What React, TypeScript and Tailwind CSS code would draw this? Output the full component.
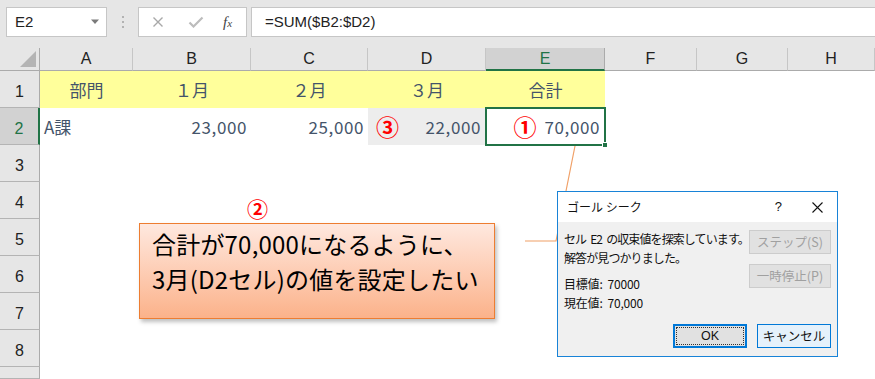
import React from "react";

const JP = { fontFamily: '"Noto Sans CJK JP", "Noto Sans", sans-serif' };
const LAT = { fontFamily: '"Liberation Sans", Arial, sans-serif' };

const colWidths = "grid-cols-[40px_93px_118px_117px_118px_119px_92px_91px_87px]";
const letters = ["A", "B", "C", "D", "E", "F", "G", "H"];

function RowHead({ n, selected, h = "h-[37px]" }: { n: number | string; selected?: boolean; h?: string }) {
  return (
    <div
      className={`${h} flex items-end justify-center pb-[3px] border-b border-[#b4b4b4] text-[16px] leading-none ${
        selected
          ? "bg-[#d2d2d2] border-r-2 border-r-[#217346] text-[#217346]"
          : "bg-[#e6e6e6] border-r border-r-[#ababab] text-[#222]"
      }`}
      style={LAT}
    >
      <span className="pb-[4px]">{n}</span>
    </div>
  );
}

export default function App() {
  return (
    <div className="relative w-[875px] h-[379px] overflow-hidden bg-white select-none">
      {/* formula bar */}
      <div className="h-[48px] bg-[#e6e6e6] flex items-start pt-[7px] pl-[6px]">
        <div className="w-[101px] h-[30px] bg-white border border-[#c6c6c6] flex items-center justify-between pl-[8px] pr-[6px]">
          <span className="text-[15px] text-[#222]" style={LAT}>E2</span>
          <svg width="10" height="6" viewBox="0 0 10 6"><path d="M1 0.5 L9 0.5 L5 5 Z" fill="#7a7a7a" /></svg>
        </div>
        <div className="w-[31px] h-[30px] flex items-center justify-center">
          <svg width="4" height="14" viewBox="0 0 4 14">
            <rect x="1" y="1" width="2" height="2" fill="#b2b2b2" />
            <rect x="1" y="6" width="2" height="2" fill="#b2b2b2" />
            <rect x="1" y="11" width="2" height="2" fill="#b2b2b2" />
          </svg>
        </div>
        <div className="w-[109px] h-[30px] bg-white border border-[#c6c6c6] flex items-center">
          <svg className="ml-[13px]" width="12" height="12" viewBox="0 0 12 12">
            <path d="M1.5 1.5 L10.5 10.5 M10.5 1.5 L1.5 10.5" stroke="#a8a8a8" strokeWidth="1.4" />
          </svg>
          <svg className="ml-[24px]" width="16" height="12" viewBox="0 0 16 12">
            <path d="M1.5 6.5 L5.5 10.5 L14.5 1.5" stroke="#bcbcbc" strokeWidth="2.2" fill="none" />
          </svg>
          <span className="ml-[19px] text-[15px] italic text-[#444]" style={{ fontFamily: '"Liberation Serif", serif' }}>
            f<span className="text-[11px]">x</span>
          </span>
        </div>
        <div className="ml-[4px] flex-1 h-[30px] bg-white border border-r-0 border-[#c6c6c6] flex items-center pl-[13px]">
          <span className="text-[15px] text-[#222]" style={LAT}>=SUM($B2:$D2)</span>
        </div>
      </div>

      {/* column headers */}
      <div className={`grid ${colWidths} h-[23px]`}>
        <div className="bg-[#e6e6e6] border-r border-b border-[#ababab] flex items-end justify-end pr-[3px] pb-[3px]">
          <svg width="16" height="16" viewBox="0 0 16 16"><path d="M16 0 L16 16 L0 16 Z" fill="#b4b4b4" /></svg>
        </div>
        {letters.map((l) => (
          <div
            key={l}
            className={`flex items-center justify-center text-[16px] leading-none ${
              l === "E"
                ? "bg-[#d2d2d2] border-b-2 border-b-[#217346] border-r border-r-[#ababab] text-[#217346]"
                : "bg-[#e6e6e6] border-b border-b-[#ababab] border-r border-r-[#c6c6c6] text-[#222]"
            }`}
            style={LAT}
          >
            {l}
          </div>
        ))}
      </div>

      {/* row 1 */}
      <div className={`grid ${colWidths}`}>
        <RowHead n={1} />
        {["部門", "１月", "２月", "３月", "合計"].map((t) => (
          <div key={t} className="h-[37px] bg-[#ffff9b] flex items-center justify-center text-[17px] text-[#44546a]" style={JP}>
            {t}
          </div>
        ))}
        <div />
        <div />
        <div />
      </div>

      {/* row 2 */}
      <div className={`grid ${colWidths}`}>
        <RowHead n={2} selected />
        <div className="h-[37px] flex items-center pl-[4px] text-[17px] text-[#44546a]" style={JP}>A課</div>
        <div className="h-[37px] flex items-center justify-end pr-[4px] text-[17px] text-[#44546a] tracking-[0.6px]" style={JP}>23,000</div>
        <div className="h-[37px] flex items-center justify-end pr-[4px] text-[17px] text-[#44546a] tracking-[0.6px]" style={JP}>25,000</div>
        <div className="h-[37px] bg-[#ededed] flex items-center justify-between pl-[8px] pr-[5px]" style={JP}>
          <span className="text-[23px] font-bold text-[#ff0000]">③</span>
          <span className="text-[17px] text-[#44546a] tracking-[0.6px]">22,000</span>
        </div>
        <div className="relative h-[37px] flex items-center justify-end pr-[5px]" style={JP}>
          <span className="text-[23px] font-bold text-[#ff0000] mr-[8px]">①</span>
          <span className="text-[17px] text-[#44546a] tracking-[0.6px]">70,000</span>
          <div className="absolute -top-[1px] -left-[1px] -right-[1px] -bottom-[1px] border-2 border-[#217346]" />
          <div className="absolute -right-[3px] -bottom-[3px] w-[6px] h-[6px] bg-[#217346] border border-white" />
        </div>
        <div />
        <div />
        <div />
      </div>

      {/* rows 3-9 */}
      {[3, 4, 5, 6, 7, 8].map((n) => (
        <div key={n} className={`grid ${colWidths}`}>
          <RowHead n={n} />
        </div>
      ))}
      <div className={`grid ${colWidths}`}>
        <RowHead n="" h="h-[12px]" />
      </div>

      {/* connector line */}
      <svg className="absolute left-0 top-0 pointer-events-none" width="875" height="379">
        <polyline points="575,146 556,241 525,241" fill="none" stroke="#f0a067" strokeWidth="1.2" />
      </svg>

      {/* ② */}
      <div className="absolute left-[247px] top-[198px] text-[21px] font-bold text-[#ff0000] leading-none" style={JP}>②</div>

      {/* callout */}
      <div
        className="absolute left-[139px] top-[223px] w-[356px] h-[96px] border border-[#ed7d31] bg-gradient-to-b from-[#fee8df] to-[#fbb28a] shadow-[2px_3px_4px_rgba(0,0,0,0.25)] pl-[12px] pt-[2px]"
        style={JP}
      >
        <div className="text-[24px] leading-[35px] text-[#000] tracking-[0.2px]">合計が70,000になるように、</div>
        <div className="text-[24px] leading-[35px] text-[#000] tracking-[0.2px]">3月(D2セル)の値を設定したい</div>
      </div>

      {/* dialog */}
      <div className="absolute left-[557px] top-[191px] w-[281px] h-[166px] border border-[#1883d7] bg-[#f0f0f0] flex flex-col" style={JP}>
        <div className="h-[30px] bg-white flex items-center pl-[9px] pr-[14px] text-[12px] text-[#111]">
          <span>ゴール シーク</span>
          <span className="ml-auto mr-[30px] text-[13px]" style={LAT}>?</span>
          <svg width="11" height="11" viewBox="0 0 11 11"><path d="M0.5 0.5 L10.5 10.5 M10.5 0.5 L0.5 10.5" stroke="#111" strokeWidth="1.1" /></svg>
        </div>
        <div className="relative flex-1 text-[12px] text-[#111]">
          <div className="absolute left-[6px] top-[7px] leading-[19px] tracking-[-0.9px] whitespace-nowrap">
            <div>セル<span className="ml-[4px]">E2</span><span className="ml-[4px]">の収束値を探索しています。</span></div>
            <div>解答が見つかりました。</div>
          </div>
          <div className="absolute left-[6px] top-[52px] leading-[19px] tracking-[-0.2px] whitespace-nowrap">
            <div>目標値:&nbsp;&nbsp;70000</div>
            <div>現在値:&nbsp;&nbsp;70,000</div>
          </div>
          <div className="absolute left-[191px] top-[8px] w-[82px] h-[24px] bg-[#e1e1e1] border border-[#cccccc] flex items-center justify-center text-[12.5px] text-[#a0a0a0]">ステップ(S)</div>
          <div className="absolute left-[191px] top-[42px] w-[82px] h-[24px] bg-[#e1e1e1] border border-[#cccccc] flex items-center justify-center text-[12.5px] text-[#a0a0a0]">一時停止(P)</div>
          <div className="absolute left-[115px] top-[102px] w-[74px] h-[24px] bg-[#e1e1e1] border-2 border-[#0078d7] flex items-center justify-center p-[1px]">
            <div className="w-full h-full border border-dotted border-[#333] flex items-center justify-center text-[12.5px]" style={LAT}>OK</div>
          </div>
          <div className="absolute left-[199px] top-[102px] w-[74px] h-[24px] bg-[#e5f1fb] border border-[#0078d7] flex items-center justify-center text-[12.5px]">キャンセル</div>
        </div>
      </div>
    </div>
  );
}
